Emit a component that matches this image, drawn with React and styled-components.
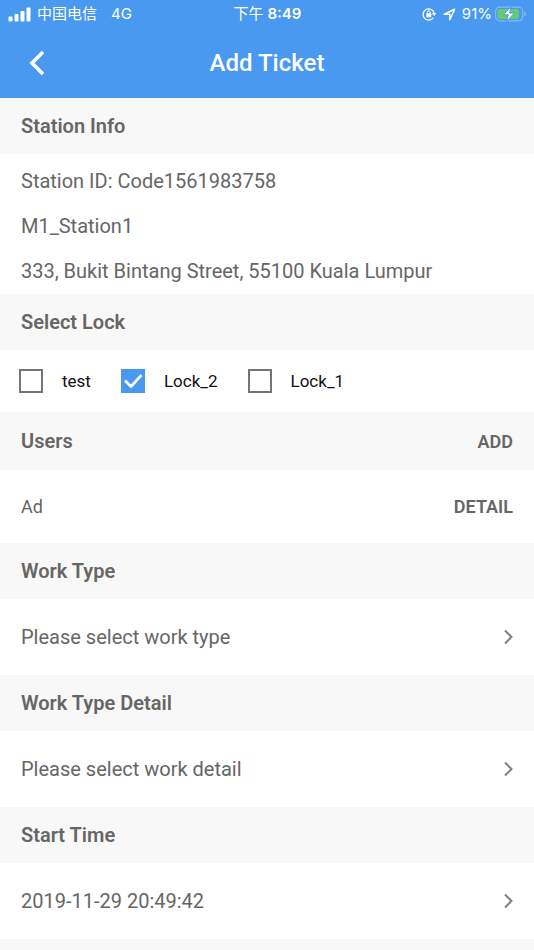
import React, { Component } from 'react';
import styled, { createGlobalStyle } from 'styled-components';


const locks = ['test', 'Lock_2', 'Lock_1'];

class App extends Component {
  state = { checked: ['Lock_2'] };

  toggleLock = (name) => {
    this.setState(({ checked }) => ({
      checked: checked.includes(name)
        ? checked.filter((item) => item !== name)
        : [...checked, name],
    }));
  };

  render() {
    const { checked } = this.state;
    return (
      <Page>
        <GlobalStyle />
        <TopBar>
          <StatusBar>
            <StatusGroup>
              <SignalIcon />
              <span>中国电信</span>
              <Network>4G</Network>
            </StatusGroup>
            <Clock><Period>下午</Period> 8:49</Clock>
            <StatusGroup $end>
              <RotationLockIcon />
              <LocationIcon />
              <Charge>
                91%
                <BatteryIcon />
              </Charge>
            </StatusGroup>
          </StatusBar>
          <NavBar>
            <BackButton type="button" aria-label="Back">
              <svg width="18" height="26" viewBox="0 0 18 26">
                <path d="M16 2 5 13l11 11" fill="none" stroke="#fff" strokeWidth="3.600" />
              </svg>
            </BackButton>
            <Title>Add Ticket</Title>
          </NavBar>
        </TopBar>

        <SectionHeader><SectionTitle>Station Info</SectionTitle></SectionHeader>
        <StationInfo>
          <p>Station ID: Code1561983758</p>
          <p>M1_Station1</p>
          <p>333, Bukit Bintang Street, 55100 Kuala Lumpur</p>
        </StationInfo>

        <SectionHeader><SectionTitle>Select Lock</SectionTitle></SectionHeader>
        <LockList>
          {locks.map((name) => (
            <LockOption key={name}>
              <CheckWrap>
                <CheckBox
                  type="checkbox"
                  checked={checked.includes(name)}
                  onChange={() => this.toggleLock(name)}
                />
                {checked.includes(name) && (
                  <Tick viewBox="0 0 24 24">
                    <path d="M4 11.500l6 6L20.500 6" fill="none" stroke="#fff" strokeWidth="2.600" />
                  </Tick>
                )}
              </CheckWrap>
              {name}
            </LockOption>
          ))}
        </LockList>

        <SectionHeader $tall>
          <SectionTitle>Users</SectionTitle>
          <TextButton type="button">ADD</TextButton>
        </SectionHeader>
        <Row $small>
          <span>Ad</span>
          <TextButton type="button">DETAIL</TextButton>
        </Row>

        <SectionHeader><SectionTitle id="work-type">Work Type</SectionTitle></SectionHeader>
        <Row>
          <Picker aria-labelledby="work-type">
            <option>Please select work type</option>
          </Picker>
          <Chevron />
        </Row>

        <SectionHeader><SectionTitle id="work-detail">Work Type Detail</SectionTitle></SectionHeader>
        <Row>
          <Picker aria-labelledby="work-detail">
            <option>Please select work detail</option>
          </Picker>
          <Chevron />
        </Row>

        <SectionHeader><SectionTitle>Start Time</SectionTitle></SectionHeader>
        <Row as="button" type="button">
          <span>2019-11-29 20:49:42</span>
          <Chevron />
        </Row>
      </Page>
    );
  }
}

export default App;


const SignalIcon = () => (
  <svg width="23" height="15" viewBox="0 0 23 15" fill="#fff">
    <rect x="0.500" y="9.500" width="4" height="5" rx="1" />
    <rect x="6.500" y="7" width="4" height="7.500" rx="1" />
    <rect x="12.500" y="4" width="4" height="10.500" rx="1" />
    <rect x="18.500" y="0.500" width="4" height="14" rx="1" />
  </svg>
);

const RotationLockIcon = () => (
  <svg width="15" height="14" viewBox="0 0 15 14" fill="none" stroke="#fff">
    <path d="M11.200 10.800A5.600 5.600 0 1 1 12.100 6" strokeWidth="1.300" />
    <path d="M9.800 6h4.600l-2.300 3z" fill="#fff" stroke="none" />
    <rect x="4.300" y="6.300" width="5" height="4" rx=".5" fill="#fff" stroke="none" />
    <path d="M5.400 6.500V5.200a1.400 1.400 0 0 1 2.800 0v1.300" strokeWidth="1" />
  </svg>
);

const LocationIcon = () => (
  <svg width="13" height="13" viewBox="0 0 13 13">
    <path d="M1.200 6.200 11.600 1.300 6.800 11.700V6.200z" fill="none" stroke="#fff" strokeWidth="1.500" strokeLinejoin="round" />
  </svg>
);

const BatteryIcon = () => (
  <svg width="32" height="16" viewBox="0 0 32 16">
    <rect x=".7" y="1.200" width="27" height="13.600" rx="4" fill="none" stroke="#83baf5" strokeWidth="1.200" />
    <path d="M29.500 5.500c1.600.6 1.600 4.400 0 5z" fill="#a2cbf7" />
    <rect x="2.500" y="3" width="21.500" height="10" rx="2" fill="#66cc68" />
    <path d="M16 .8 8.500 8.800h4.800L11.500 15.400 19.500 7h-4.900z" fill="#fff" stroke="#4999f0" strokeWidth="1" />
  </svg>
);

const Chevron = () => (
  <svg width="10" height="16" viewBox="0 0 10 16">
    <path d="M2 1.500 8.500 8 2 14.500" fill="none" stroke="#808080" strokeWidth="2" />
  </svg>
);

const GlobalStyle = createGlobalStyle`
  * {
    box-sizing: border-box;
  }
  body {
    margin: 0;
    font-family: Roboto, "Noto Sans CJK SC", sans-serif;
    color: #666;
  }
  button, select {
    padding: 0;
    border: 0;
    background: none;
    color: inherit;
    font: inherit;
  }
`;

const Page = styled.div`
  min-height: 100vh;
  background: #f8f8f8;
`;

const TopBar = styled.header`
  background: #4999f0;
  color: #fff;
`;

const StatusBar = styled.div`
  display: grid;
  grid-template-columns: 1fr auto 1fr;
  align-items: center;
  height: 28px;
  padding: 0 7px 0 8px;
  font-family: Inter, "Noto Sans CJK SC", sans-serif;
  font-size: 15px;
  line-height: 20px;
`;

const StatusGroup = styled.div`
  display: flex;
  align-items: center;
  justify-content: ${({ $end }) => ($end ? 'flex-end' : 'flex-start')};
  gap: 6px;
`;

const Network = styled.span`
  margin-left: 8px;
`;

const Charge = styled.span`
  display: flex;
  align-items: center;
  gap: 3px;
`;

const Clock = styled.span`
  font-weight: 600;
`;

const Period = styled.span`
  font-weight: 400;
`;

const NavBar = styled.div`
  display: grid;
  grid-template-columns: 1fr auto 1fr;
  align-items: center;
  height: 70px;
  padding: 0 27px;
`;

const BackButton = styled.button`
  display: flex;
  justify-self: start;
`;

const Title = styled.h1`
  margin: 0;
  font-size: 24px;
  font-weight: 500;
  line-height: 32px;
`;

const SectionHeader = styled.div`
  display: flex;
  align-items: center;
  justify-content: space-between;
  height: ${({ $tall }) => ($tall ? 58 : 56)}px;
  padding: 0 21px;
`;

const SectionTitle = styled.h2`
  margin: 0;
  font-size: 20px;
  font-weight: 600;
  line-height: 24px;
`;

const StationInfo = styled.div`
  padding: 5px 21px 0;
  background: #fff;
  p {
    margin: 0;
    font-size: 20px;
    line-height: 45px;
  }
`;

const LockList = styled.div`
  display: flex;
  flex-wrap: wrap;
  align-items: center;
  gap: 30px;
  min-height: 62px;
  padding: 0 19px;
  background: #fff;
`;

const LockOption = styled.label`
  display: flex;
  align-items: center;
  gap: 19px;
  color: #111;
  font-size: 17px;
  line-height: 24px;
`;

const CheckWrap = styled.span`
  position: relative;
  display: flex;
`;

const CheckBox = styled.input`
  appearance: none;
  width: 24px;
  height: 24px;
  margin: 0;
  border: 2px solid #757575;
  &:checked {
    border-color: #4999f0;
    background: #4999f0;
  }
`;

const Tick = styled.svg`
  position: absolute;
  inset: 0;
  pointer-events: none;
`;

const Row = styled.div`
  display: flex;
  align-items: center;
  justify-content: space-between;
  width: 100%;
  height: ${({ $small }) => ($small ? 73 : 76)}px;
  && {
    padding: 0 21px;
    background: #fff;
    font-size: ${({ $small }) => ($small ? 18 : 20)}px;
  }
`;

const TextButton = styled.button`
  && {
    font-size: 18px;
    font-weight: 600;
  }
`;

const Picker = styled.select`
  flex: 1;
  height: 100%;
  appearance: none;
`;
